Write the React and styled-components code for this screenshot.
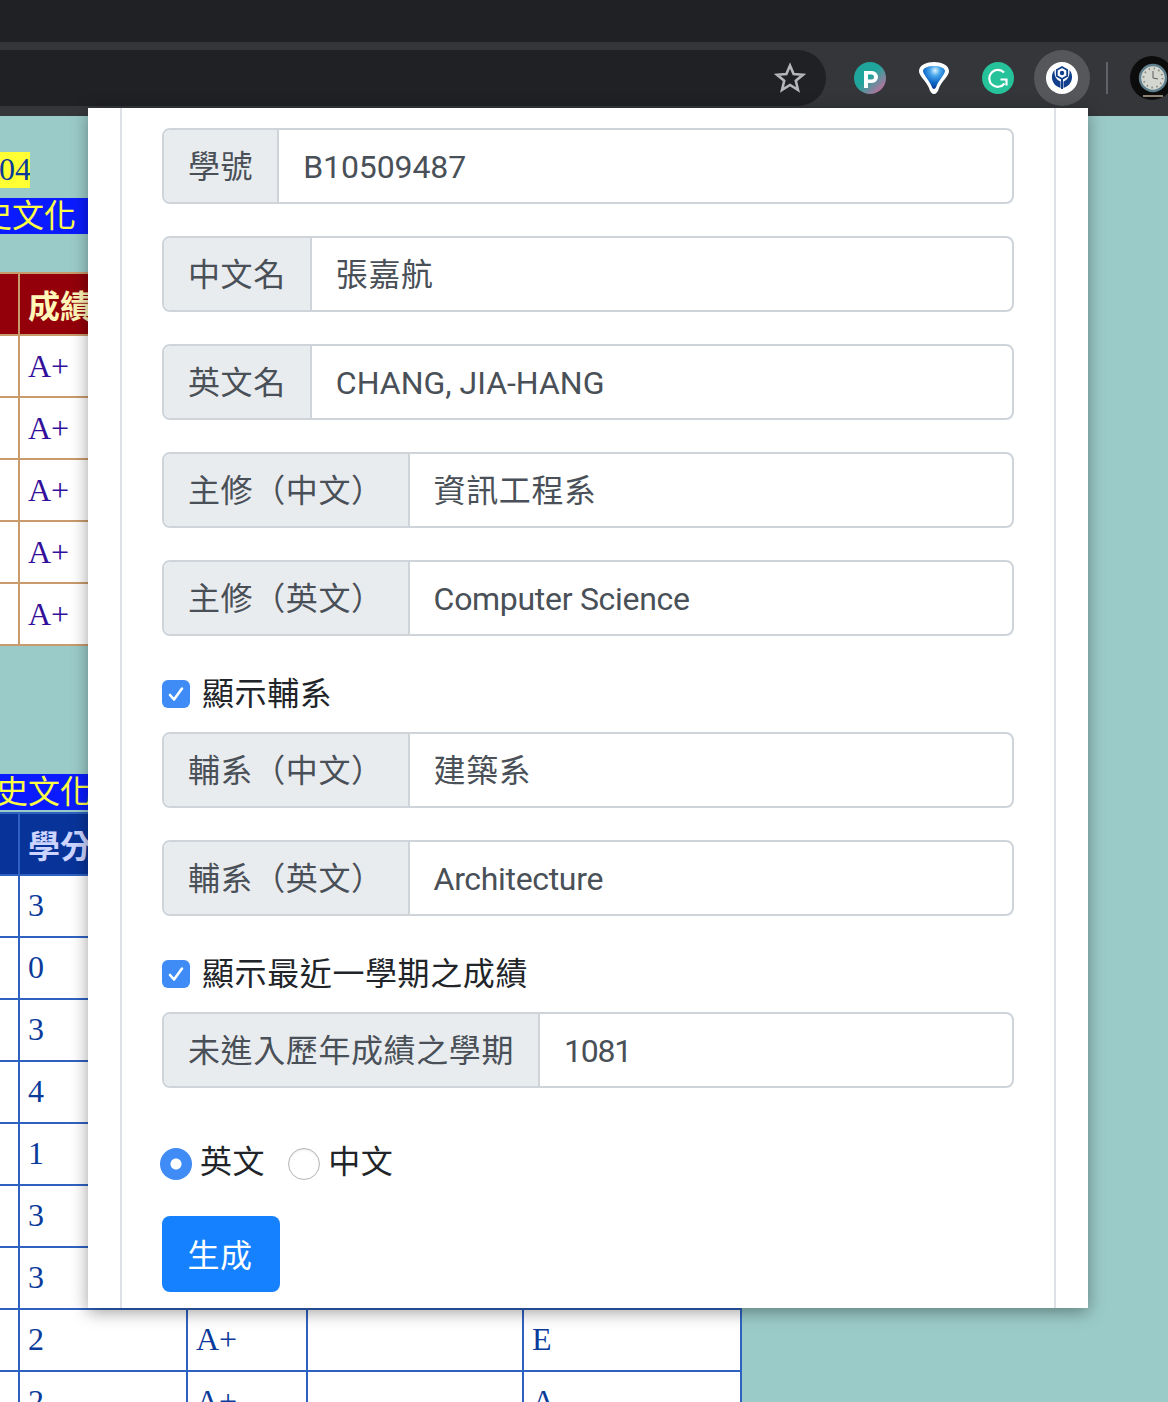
import React from 'react';
import styled, { createGlobalStyle } from 'styled-components';

const GlobalStyle = createGlobalStyle`
    html, body {
        margin: 0;
        padding: 0;
    }

    * {
        box-sizing: border-box;
    }
`

const Screen = styled.div`
    position: relative;
    width: 1168px;
    height: 1402px;
    overflow: hidden;
    background-color: #9bcbc9;
`

const TabStrip = styled.div`
    height: 42px;
    background-color: #202124;
`

const Toolbar = styled.div`
    height: 74px;
    padding-top: 8px;
    background-color: #35363a;
    display: flex;
    align-items: flex-start;
`

const AddressBar = styled.div`
    width: 826px;
    height: 56px;
    flex-shrink: 0;
    padding-right: 20px;
    border-radius: 0 28px 28px 0;
    background-color: #202124;
    display: flex;
    align-items: center;
    justify-content: flex-end;
`

const Extensions = styled.div`
    height: 56px;
    padding-left: 28px;
    flex-shrink: 0;
    display: flex;
    align-items: center;
`

const ExtSlot = styled.div`
    width: 32px;
    height: 32px;
    margin-right: ${props => props.$gap || 32}px;
    flex-shrink: 0;
    display: flex;
    align-items: center;
    justify-content: center;
`

const ActiveRing = styled.div`
    width: 56px;
    height: 56px;
    margin-right: 16px;
    flex-shrink: 0;
    border-radius: 50%;
    background-color: #55575b;
    display: flex;
    align-items: center;
    justify-content: center;
`

const Divider = styled.div`
    width: 2px;
    height: 32px;
    margin-right: 22px;
    flex-shrink: 0;
    background-color: #5f6368;
`

const Avatar = styled.div`
    width: 44px;
    height: 44px;
    flex-shrink: 0;
`

const Background = styled.div`
    padding-top: 36px;
    font-family: "Liberation Serif", "Noto Sans CJK TC", serif;
    font-size: 32px;
`

const YearTag = styled.div`
    width: 30px;
    height: 36px;
    line-height: 34px;
    overflow: hidden;
    text-indent: -1px;
    background-color: #ffff33;
    color: #0a3a9a;
`

const TitleBar = styled.div`
    width: 88px;
    height: 36px;
    margin-top: ${props => props.$top}px;
    line-height: 36px;
    white-space: nowrap;
    overflow: hidden;
    background-color: #0a1cff;
    color: #ffff44;
    text-indent: ${props => props.$indent}px;
`

const GradeTable = styled.div`
    margin-top: ${props => props.$top}px;
    width: 742px;
    border-top: 2px solid ${props => props.$line};
    color: ${props => props.$ink};
`

const GradeRow = styled.div`
    height: 62px;
    display: grid;
    grid-template-columns: 20px 168px 120px 216px 218px;
    border-bottom: 2px solid ${props => props.$line};
    background-color: ${props => props.$fill || '#fff'};
    color: ${props => props.$text || 'inherit'};
`

const GradeCell = styled.div`
    padding-left: 8px;
    border-right: 2px solid ${props => props.$line};
    line-height: ${props => props.$head ? 66 : props.$lift ? 58 : 60}px;
    white-space: nowrap;
    overflow: hidden;
    font-weight: ${props => props.$head ? 700 : 400};
`

const Modal = styled.div`
    position: absolute;
    left: 88px;
    top: 108px;
    width: 1000px;
    height: 1200px;
    padding: 0 32px;
    overflow: hidden;
    background-color: #fff;
    box-shadow: 0 4px 16px rgba(0, 0, 0, 0.38);
    font-family: Roboto, "Noto Sans CJK TC", sans-serif;
    font-size: 32px;
`

const ModalBody = styled.div`
    height: 100%;
    padding: 20px 40px 0;
    border-left: 2px solid #dee2e6;
    border-right: 2px solid #dee2e6;
`

const InputGroup = styled.div`
    height: 76px;
    margin-bottom: ${props => props.$gap}px;
    border: 2px solid #ced4da;
    border-radius: 8px;
    display: flex;
    overflow: hidden;
`

const GroupLabel = styled.div`
    padding: 0 24px;
    border-right: 2px solid #ced4da;
    background-color: #e9ecef;
    color: #495057;
    line-height: 75px;
    letter-spacing: 0.6px;
    white-space: nowrap;
`

const GroupValue = styled.div`
    flex: 1;
    padding: 0 24px;
    color: #495057;
    line-height: 75px;
    letter-spacing: ${props => props.$spacing || 0}px;
    white-space: nowrap;
`

const CheckRow = styled.label`
    height: 48px;
    margin-bottom: 16px;
    padding-bottom: 3px;
    display: flex;
    align-items: center;
    color: #212529;
    letter-spacing: 0.6px;
`

const CheckBox = styled.span`
    width: 28px;
    height: 28px;
    margin: 6px 12px 0 0;
    border-radius: 6px;
    background-color: #3f8cf6;
    display: flex;
    align-items: center;
    justify-content: center;
`

const RadioRow = styled.div`
    height: 40px;
    margin: 53px 0 35px -2px;
    padding-bottom: 4px;
    display: flex;
    align-items: center;
    color: #212529;
    letter-spacing: 0.6px;
`

const Radio = styled.span`
    width: 32px;
    height: 32px;
    margin: 10px 8px 0 0;
    border-radius: 50%;
    flex-shrink: 0;
    ${props => props.$checked
        ? 'background: radial-gradient(circle, #fff 0 5px, #3f8cf6 6px);'
        : 'background: #fff; border: 1px solid #b5b5b5; box-shadow: inset 0 1px 2px rgba(0, 0, 0, 0.1);'}
`

const RadioText = styled.span`
    margin-right: 23px;
`

const SubmitButton = styled.button`
    width: 118px;
    height: 76px;
    padding: 0 2px 2px 0;
    border: none;
    border-radius: 8px;
    background-color: #1681ff;
    color: #fff;
    font: inherit;
    letter-spacing: 0.6px;
`

const firstRows = ['A+', 'A+', 'A+', 'A+', 'A+'];
const secondRows = [
    ['3', ''],
    ['0', ''],
    ['3', ''],
    ['4', ''],
    ['1', ''],
    ['3', ''],
    ['3', ''],
    ['2', 'A+', '', 'E'],
    ['2', 'A+', '', 'A'],
];

const fieldsTop = [
    ['學號', 'B10509487', -0.1],
    ['中文名', '張嘉航', 0.6],
    ['英文名', 'CHANG, JIA-HANG', 0],
    ['主修（中文）', '資訊工程系', 0.6],
    ['主修（英文）', 'Computer Science', -0.3],
];

const fieldsMinor = [
    ['輔系（中文）', '建築系', 0.6],
    ['輔系（英文）', 'Architecture', -0.33],
];

const StarIcon = () => (
    <svg width="32" height="32" viewBox="0 0 32 32" fill="none" stroke="#b4b6b8" strokeWidth="2.6" strokeLinejoin="miter">
        <path d="M16 3.500l3.600 8.600 9.300.7-7.100 6 2.200 9.100L16 23l-8 4.900 2.200-9.100-7.100-6 9.300-.7z" />
    </svg>
);

const PIcon = () => (
    <svg width="32" height="32" viewBox="0 0 32 32">
        <defs>
            <linearGradient id="pGrad" x1="0.15" y1="0.15" x2="0.9" y2="0.95">
                <stop offset="0.4" stopColor="#1fa59b" />
                <stop offset="1" stopColor="#d06a9e" />
            </linearGradient>
        </defs>
        <circle cx="16" cy="16" r="16" fill="url(#pGrad)" />
        <path d="M10 26V9h8a6 6 0 0 1 0 12h-4v5z M14 12.500v5h3.500a2.500 2.500 0 0 0 0-5z" fill="#fff" fillRule="evenodd" />
    </svg>
);

const FunnelIcon = () => (
    <svg width="32" height="34" viewBox="0 0 32 34">
        <defs>
            <radialGradient id="fGrad" cx="0.55" cy="0.2" r="0.75">
                <stop offset="0" stopColor="#dff4ff" />
                <stop offset="0.3" stopColor="#4aa8ec" />
                <stop offset="0.7" stopColor="#0f68c8" />
                <stop offset="1" stopColor="#0a3f9c" />
            </radialGradient>
        </defs>
        <path d="M16 1C23 1 31 4 31 10C31 15 24 20 21 27C20 31 18 33 16 33C14 33 12 31 11 27C8 20 1 15 1 10C1 4 9 1 16 1z" fill="#fff" />
        <path d="M16 5C22 5 27 7 27 10C27 13 21 19 18.500 25C18 27 17 28 16 28C15 28 14 27 13.500 25C11 19 5 13 5 10C5 7 10 5 16 5z" fill="url(#fGrad)" />
    </svg>
);

const GrammarlyIcon = () => (
    <svg width="32" height="32" viewBox="0 0 32 32">
        <circle cx="16" cy="16" r="16" fill="#26c29a" />
        <path d="M22 10.500A8.500 8.500 0 1 0 22.500 21.500" fill="none" stroke="#fff" strokeWidth="2.200" />
        <path d="M18.500 17.500h6v6" fill="none" stroke="#fff" strokeWidth="2.200" />
    </svg>
);

const ShieldIcon = () => (
    <svg width="32" height="32" viewBox="0 0 32 32">
        <circle cx="16" cy="16" r="16" fill="#fff" />
        <path d="M8.500 8C4 13 5 23 14.500 26V19.500C10.500 18 8 14 8.500 8z" fill="#123f8c" />
        <path d="M23.500 8C28 13 27 23 17.500 26V19.500C21.500 18 24 14 23.500 8z" fill="#123f8c" />
        <path d="M16 5l5.200 3v6L16 17l-5.200-3V8z" fill="#fff" stroke="#123f8c" strokeWidth="1.800" />
        <circle cx="16" cy="11" r="2.200" fill="#123f8c" />
        <rect x="15" y="17" width="2" height="10" fill="#123f8c" />
    </svg>
);

const ClockAvatar = () => (
    <svg width="44" height="44" viewBox="0 0 44 44">
        <circle cx="22" cy="22" r="22" fill="#0c0c0c" />
        <circle cx="23" cy="22" r="13" fill="#d4d6d0" stroke="#5f7f8c" strokeWidth="2.400" />
        <circle cx="23" cy="22" r="9.500" fill="none" stroke="#8a8a86" strokeWidth="1.800" strokeDasharray="1.500 3.500" />
        <path d="M23 15v7l5 1" fill="none" stroke="#5a5a5a" strokeWidth="1" />
        <rect x="13" y="39" width="20" height="2" fill="#8f8374" />
    </svg>
);

const CheckMark = () => (
    <svg width="20" height="20" viewBox="0 0 20 20" fill="none" stroke="#fff" strokeWidth="2.600" strokeLinecap="round" strokeLinejoin="round">
        <path d="M4 11l4 4.500L16 4.500" />
    </svg>
);

const Field = ({ label, value, spacing, gap }) => (
    <InputGroup $gap={gap}>
        <GroupLabel>{label}</GroupLabel>
        <GroupValue $spacing={spacing}>{value}</GroupValue>
    </InputGroup>
);

const App = () => {
    const tan = '#c89a6c';
    const blue = '#2f62c0';

    return (
        <Screen>
            <GlobalStyle />
            <TabStrip />
            <Toolbar>
                <AddressBar>
                    <StarIcon />
                </AddressBar>
                <Extensions>
                    <ExtSlot><PIcon /></ExtSlot>
                    <ExtSlot><FunnelIcon /></ExtSlot>
                    <ExtSlot $gap={20}><GrammarlyIcon /></ExtSlot>
                    <ActiveRing><ShieldIcon /></ActiveRing>
                    <Divider />
                    <Avatar><ClockAvatar /></Avatar>
                </Extensions>
            </Toolbar>

            <Background>
                <YearTag>04</YearTag>
                <TitleBar $top={10} $indent={-20}>史文化</TitleBar>
                <GradeTable $top={38} $line={tan} $ink="#33109a">
                    <GradeRow $line={tan} $fill="#93000a" $text="#fff6b8">
                        <GradeCell $line={tan} />
                        <GradeCell $line={tan} $head>成績</GradeCell>
                    </GradeRow>
                    {firstRows.map((grade, index) => (
                        <GradeRow $line={tan} key={index}>
                            <GradeCell $line={tan} />
                            <GradeCell $line={tan}>{grade}</GradeCell>
                        </GradeRow>
                    ))}
                </GradeTable>
                <TitleBar $top={128} $indent={-4}>史文化</TitleBar>
                <GradeTable $top={2} $line={blue} $ink="#0a3a9a">
                    <GradeRow $line={blue} $fill="#08349a" $text="#cdd4ff">
                        <GradeCell $line={blue} />
                        <GradeCell $line={blue} $head>學分</GradeCell>
                        <GradeCell $line={blue} />
                        <GradeCell $line={blue} />
                        <GradeCell $line={blue} />
                    </GradeRow>
                    {secondRows.map((row, index) => (
                        <GradeRow $line={blue} key={index}>
                            <GradeCell $line={blue} />
                            <GradeCell $line={blue} $lift>{row[0]}</GradeCell>
                            <GradeCell $line={blue} $lift>{row[1]}</GradeCell>
                            <GradeCell $line={blue} $lift>{row[2]}</GradeCell>
                            <GradeCell $line={blue} $lift>{row[3]}</GradeCell>
                        </GradeRow>
                    ))}
                </GradeTable>
            </Background>

            <Modal>
                <ModalBody>
                    {fieldsTop.map(([label, value, spacing], index) => (
                        <Field label={label} value={value} spacing={spacing} key={index} gap={32} />
                    ))}
                    <CheckRow><CheckBox><CheckMark /></CheckBox>顯示輔系</CheckRow>
                    {fieldsMinor.map(([label, value, spacing], index) => (
                        <Field label={label} value={value} spacing={spacing} key={index} gap={32} />
                    ))}
                    <CheckRow><CheckBox><CheckMark /></CheckBox>顯示最近一學期之成績</CheckRow>
                    <Field label="未進入歷年成績之學期" value="1081" spacing={-1.2} gap={0} />
                    <RadioRow>
                        <Radio $checked /><RadioText>英文</RadioText>
                        <Radio /><RadioText>中文</RadioText>
                    </RadioRow>
                    <SubmitButton>生成</SubmitButton>
                </ModalBody>
            </Modal>
        </Screen>
    );
}

export default App;
